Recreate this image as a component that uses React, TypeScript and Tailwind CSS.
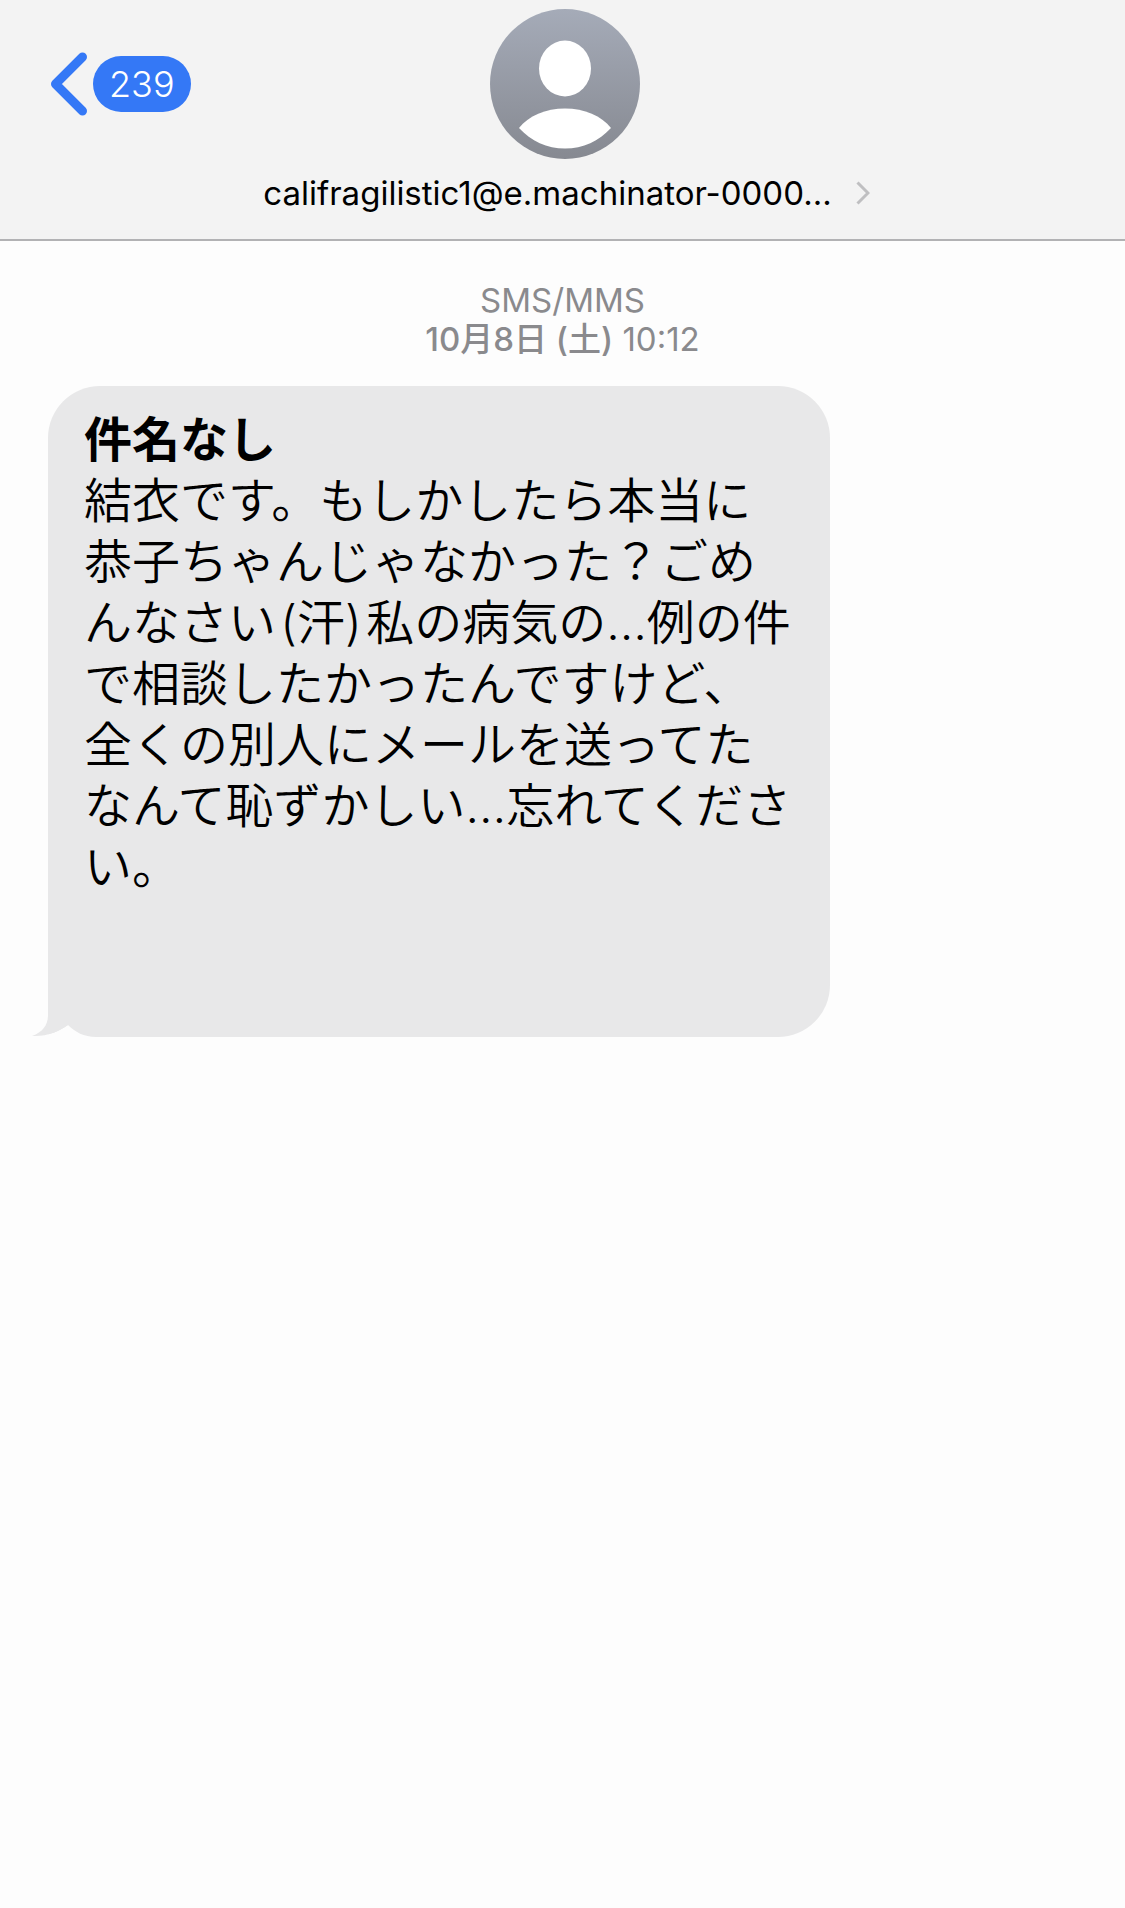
type Message = {
  id: string;
  subject: string;
  body: string;
};

const contact = {
  name: "califragilistic1@e.machinator-0000...",
  unread: 239,
};

const messages: Message[] = [
  {
    id: "m1",
    subject: "件名なし",
    body: "結衣です。もしかしたら本当に恭子ちゃんじゃなかった？ごめんなさい\u200a(汗)\u200a私の病気の…例の件で相談したかったんですけど、全くの別人にメールを送ってたなんて恥ずかしい…忘れてください。\n\n\n",
  },
];

function Avatar() {
  return (
    <svg viewBox="0 0 150 150" className="size-[150px]" aria-hidden="true">
      <defs>
        <linearGradient id="avatar-bg" x1="0" y1="0" x2="0" y2="1">
          <stop offset="0" stopColor="#a5abb8" />
          <stop offset="1" stopColor="#868991" />
        </linearGradient>
      </defs>
      <circle cx="75" cy="75" r="75" fill="url(#avatar-bg)" />
      <ellipse cx="75" cy="59.5" rx="26" ry="28" fill="#fff" />
      <path
        d="M29 119C38 107 56 99.500 75 99.500S112 107 121 119C109 132 93 139.500 75 139.500S41 132 29 119Z"
        fill="#fff"
      />
    </svg>
  );
}

function ChatHeader() {
  return (
    <header className="grid grid-cols-[1fr_auto_1fr] border-b-2 border-[#b2b2b4] bg-[#f3f3f3] pt-[9px] pb-6 pl-1">
      <button
        type="button"
        className="mt-[43px] ml-11 flex h-16 items-center gap-[5px] justify-self-start"
        aria-label={`戻る ${contact.unread}`}
      >
        <svg viewBox="0 0 40 64" className="h-16 w-10" fill="none" aria-hidden="true">
          <path
            d="M34.500 5L7.500 32L34.500 59"
            stroke="#3478f6"
            strokeWidth="9"
            strokeLinecap="round"
            strokeLinejoin="round"
          />
        </svg>
        <span className="flex h-14 items-center rounded-full bg-[#3478f6] px-4 text-[36px] font-[350] text-white">
          {contact.unread}
        </span>
      </button>

      <button type="button" className="flex flex-col items-center gap-3">
        <Avatar />
        <span className="flex items-center gap-6 pl-1 text-[33px] leading-[44px] text-black">
          {contact.name}
          <svg viewBox="0 0 14 24" className="h-6 w-3.5" fill="none" aria-hidden="true">
            <path d="M1.500 1.500L12 12L1.500 22.500" stroke="#bfbfc1" strokeWidth="3" />
          </svg>
        </span>
      </button>
    </header>
  );
}

function MessageBubble({ message }: { message: Message }) {
  return (
    <article className="relative w-[782px] max-w-full rounded-[52px] rounded-bl-none bg-[#e8e8e9] pt-[23px] pr-8 pb-[18px] pl-9 text-[48px] leading-[61px] text-black">
      <h2 className="font-bold">{message.subject}</h2>
      <p className="font-[350] whitespace-pre-wrap">{message.body}</p>
      {/* tail, with the notch between it and the rounded corner */}
      <svg
        viewBox="0 0 64 49"
        className="absolute -bottom-px -left-4 h-[49px] w-16"
        aria-hidden="true"
      >
        <path d="M0 49V47C14 48 28 42 36 36C43 43 52 48 64 48V49Z" fill="#fdfdfd" />
        <path d="M16 0V26C16 36 11 43 0 47C14 48 28 42 36 36V0Z" fill="#e8e8e9" />
      </svg>
    </article>
  );
}

export default function App() {
  return (
    <div
      lang="ja"
      className="min-h-screen bg-[#fdfdfd] font-['Inter','Noto_Sans_CJK_JP',sans-serif]"
    >
      <ChatHeader />
      <main className="px-12 pt-10">
        <div className="mb-[27px] text-center text-[33px] leading-[39px] text-[#8a8a8d]">
          <p>SMS/MMS</p>
          <p>
            <span className="font-medium">10月8日 (土)</span> <time>10:12</time>
          </p>
        </div>
        {messages.map((message) => (
          <MessageBubble key={message.id} message={message} />
        ))}
      </main>
    </div>
  );
}
